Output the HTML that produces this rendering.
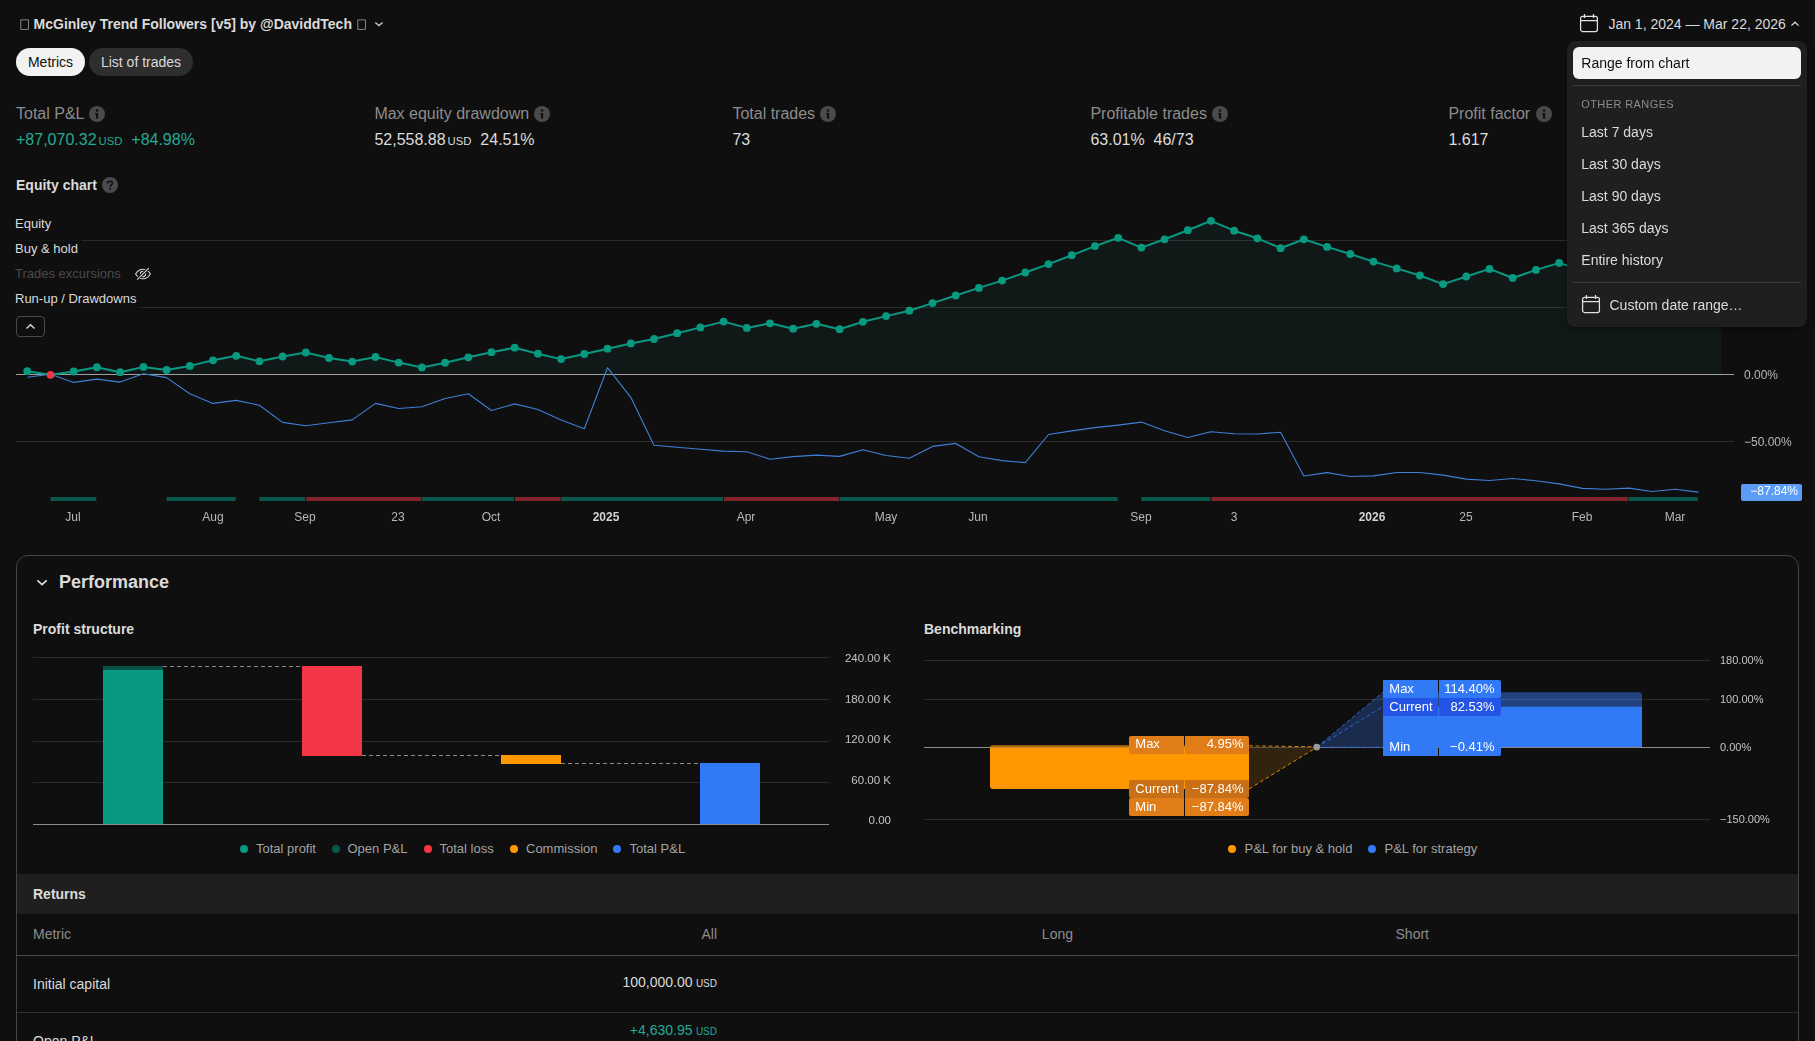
<!DOCTYPE html>
<html><head><meta charset="utf-8"><title>Strategy report</title>
<style>
*{box-sizing:border-box;margin:0;padding:0}
html,body{width:1815px;height:1041px;overflow:hidden;background:#0f0f0f}
body{font-family:"Liberation Sans",sans-serif;color:#dbdbdb;position:relative;font-size:14px}
.abs{position:absolute}
.t{position:absolute;white-space:nowrap;line-height:1}
.title{left:33px;top:16px;font-size:14px;font-weight:700;line-height:16px;color:#dbdbdb}
.tofu{position:absolute;top:19px;width:8px;height:10px;border:1px solid #bdbdbd}
.pill{position:absolute;top:48px;height:28px;border-radius:14px;font-size:14px;line-height:28px;text-align:center}
.mlabel{font-size:16px;color:#8c8c8c;top:105px;line-height:18px}
.mval{font-size:16px;color:#dbdbdb;top:131px;line-height:18px}
.mval small{font-size:11.3px;margin-left:2px}
.info{position:absolute;top:106px;width:16px;height:16px}
.lg{position:absolute;left:11px;height:22px;line-height:22px;font-size:13px;padding:0 4px;background:rgba(15,15,15,.8);color:#dbdbdb;white-space:nowrap}
.xl{position:absolute;top:510px;width:60px;text-align:center;font-size:12px;line-height:14px;color:#b8b8b8}
.xl.b{font-weight:700;color:#d1d1d1}
.yl{position:absolute;left:1744px;font-size:12px;line-height:14px;color:#b8b8b8}
.menu{position:absolute;left:1567px;top:41px;width:240px;height:286px;border-radius:8px;background:#1f1f1f;box-shadow:0 2px 6px rgba(0,0,0,.45)}
.mi{position:absolute;left:14.3px;font-size:14px;line-height:16px;color:#dbdbdb;white-space:nowrap}
.sep{position:absolute;left:6px;width:228px;height:1px;background:#3d3d3d}
.panel{position:absolute;left:16px;top:555px;width:1783px;height:520px;border:1px solid #434343;border-radius:12px}
.h3{font-size:14px;font-weight:700;color:#dbdbdb;line-height:16px}
.pyl{position:absolute;font-size:11px;line-height:12px;color:#c4c4c4}
.leg{position:absolute;top:841px;font-size:13px;line-height:15px;color:#a3a3a3;white-space:nowrap}
.dot{position:absolute;top:845px;width:8px;height:8px;border-radius:50%}
.bl{position:absolute;height:18px;font-size:13px;line-height:18px;color:#fff;white-space:nowrap}
.bl.k{padding-left:6.3px;text-align:left;border-radius:2px 0 0 2px}
.bl.v{padding-right:6.5px;text-align:right;border-radius:0 2px 2px 0}
.bl.o{height:17.8px;line-height:16px}
.bl.v.o{padding-right:5.5px}
.bl.k.b{border-radius:0}
.xl,.yl,.pyl,.bl,.cv,.menu{will-change:transform}
</style></head><body>
<!-- header -->
<svg class="abs" style="left:19.5px;top:18.5px" width="10" height="12" viewBox="0 0 10 12"><rect x="0.85" y="0.9" width="7.6" height="9.4" fill="none" stroke="#b4b4b4" stroke-width=".7"/></svg>
<div class="t title" style="left:33.6px">McGinley Trend Followers [v5] by @DaviddTech</div>
<svg class="abs" style="left:356.5px;top:18.5px" width="10" height="12" viewBox="0 0 10 12"><rect x="0.85" y="0.9" width="7.6" height="9.4" fill="none" stroke="#b4b4b4" stroke-width=".7"/></svg>
<svg class="abs" style="left:373px;top:19px" width="12" height="10" viewBox="0 0 12 10"><path d="M2.3 3.4 L5.95 6.6 L9.6 3.4" fill="none" stroke="#c9c9c9" stroke-width="1.35"/></svg>

<svg class="abs" style="left:1578px;top:13px" width="22" height="20" viewBox="0 0 22 20"><rect x="2.6" y="3.45" width="16.8" height="15.05" rx="2" fill="none" stroke="#e0e0e0" stroke-width="1.25"/><path d="M2.6 7.5H19.4M6.45 1V5.1M15.5 1V5.1" stroke="#e0e0e0" stroke-width="1.25" fill="none"/></svg>
<div class="t" style="left:1608.4px;top:16px;font-size:14px;line-height:16px;color:#dbdbdb">Jan 1, 2024 — Mar 22, 2026</div>
<svg class="abs" style="left:1789px;top:19px" width="12" height="10" viewBox="0 0 12 10"><path d="M2.4 6.6 L6 3.2 L9.6 6.6" fill="none" stroke="#dbdbdb" stroke-width="1.3"/></svg>

<!-- tabs -->
<div class="pill" style="left:16px;width:69px;background:#f2f2f2;color:#0f0f0f">Metrics</div>
<div class="pill" style="left:89px;width:104px;background:#2e2e2e;color:#dbdbdb">List of trades</div>

<!-- metrics -->
<div class="t mlabel" style="left:16px">Total P&amp;L</div>
<div class="t mval" style="left:16px;color:#22ab94">+87,070.32<small>USD</small>&nbsp; +84.98%</div>
<div class="t mlabel" style="left:374.4px">Max equity drawdown</div>
<div class="t mval" style="left:374.4px">52,558.88<small>USD</small>&nbsp; 24.51%</div>
<div class="t mlabel" style="left:732.4px">Total trades</div>
<div class="t mval" style="left:732.4px">73</div>
<div class="t mlabel" style="left:1090.4px">Profitable trades</div>
<div class="t mval" style="left:1090.4px">63.01%&nbsp; 46/73</div>
<div class="t mlabel" style="left:1448.4px">Profit factor</div>
<div class="t mval" style="left:1448.4px">1.617</div>
<svg class="info" style="left:89px" viewBox="0 0 16 16"><circle cx="8" cy="8" r="8" fill="#4a4a4a"/><rect x="7.05" y="7" width="2.1" height="5.7" fill="#0f0f0f"/><rect x="6.1" y="7" width="1.5" height="1.3" fill="#0f0f0f"/><circle cx="8.1" cy="4.4" r="1.25" fill="#0f0f0f"/></svg><svg class="info" style="left:533.5px" viewBox="0 0 16 16"><circle cx="8" cy="8" r="8" fill="#4a4a4a"/><rect x="7.05" y="7" width="2.1" height="5.7" fill="#0f0f0f"/><rect x="6.1" y="7" width="1.5" height="1.3" fill="#0f0f0f"/><circle cx="8.1" cy="4.4" r="1.25" fill="#0f0f0f"/></svg><svg class="info" style="left:820px" viewBox="0 0 16 16"><circle cx="8" cy="8" r="8" fill="#4a4a4a"/><rect x="7.05" y="7" width="2.1" height="5.7" fill="#0f0f0f"/><rect x="6.1" y="7" width="1.5" height="1.3" fill="#0f0f0f"/><circle cx="8.1" cy="4.4" r="1.25" fill="#0f0f0f"/></svg><svg class="info" style="left:1212px" viewBox="0 0 16 16"><circle cx="8" cy="8" r="8" fill="#4a4a4a"/><rect x="7.05" y="7" width="2.1" height="5.7" fill="#0f0f0f"/><rect x="6.1" y="7" width="1.5" height="1.3" fill="#0f0f0f"/><circle cx="8.1" cy="4.4" r="1.25" fill="#0f0f0f"/></svg><svg class="info" style="left:1535.5px" viewBox="0 0 16 16"><circle cx="8" cy="8" r="8" fill="#4a4a4a"/><rect x="7.05" y="7" width="2.1" height="5.7" fill="#0f0f0f"/><rect x="6.1" y="7" width="1.5" height="1.3" fill="#0f0f0f"/><circle cx="8.1" cy="4.4" r="1.25" fill="#0f0f0f"/></svg>

<!-- equity chart header -->
<div class="t h3" style="left:16px;top:177px">Equity chart</div>
<svg class="abs" style="left:102px;top:177px" width="16" height="16" viewBox="0 0 16 16"><circle cx="8" cy="8" r="8" fill="#4a4a4a"/><path d="M5.6 6.4 C5.6 4.9 6.6 4.15 8 4.15 C9.4 4.15 10.4 4.9 10.4 6.1 C10.4 7.1 9.8 7.6 9.1 8.1 C8.4 8.6 8.1 9 8.1 10" fill="none" stroke="#0f0f0f" stroke-width="1.5"/><circle cx="8.1" cy="12" r="1" fill="#0f0f0f"/></svg>

<!-- equity chart -->
<svg class="abs" style="left:0;top:0" width="1815" height="545" viewBox="0 0 1815 545">
<polygon points="27.3,371.2 50.5,374.8 73.7,371.5 96.9,367.2 120.1,372.2 143.4,366.9 166.6,370 189.8,365.9 213.0,360.3 236.2,355.8 259.4,361.3 282.6,356.5 305.8,352.5 329.0,358 352.2,361.6 375.5,357 398.7,362.6 421.9,367.4 445.1,362.7 468.3,357.3 491.5,352.2 514.7,347.7 537.9,353.7 561.1,359.1 584.3,354 607.5,348.7 630.8,343.4 654.0,339 677.2,333.2 700.4,327.4 723.6,321.6 746.8,327.9 770.0,323.3 793.2,328.7 816.4,323.8 839.6,329.2 862.9,321.8 886.1,316.1 909.3,310.7 932.5,303.1 955.7,295.5 978.9,287.9 1002.1,280.6 1025.3,272.5 1048.5,264.1 1071.8,255.2 1095.0,246.1 1118.2,237.8 1141.4,247.6 1164.6,239.3 1187.8,230.2 1211.0,220.8 1234.2,230.7 1257.4,238.3 1280.6,248.2 1303.8,239.3 1327.1,246.9 1350.3,254 1373.5,261.6 1396.7,268.4 1419.9,275.5 1443.1,284.1 1466.3,276.5 1489.5,268.9 1512.7,278.0 1536.0,269.9 1559.2,262.9 1582.4,270.5 1605.6,263 1628.8,256 1652.0,263.5 1675.2,270 1698.4,263.7 1721,263.7 1721,374.5 27.3,374.5" fill="#111918"/>
<line x1="16" x2="1734" y1="240.5" y2="240.5" stroke="rgba(255,255,255,.115)" stroke-width="1"/>
<line x1="16" x2="1734" y1="307.5" y2="307.5" stroke="rgba(255,255,255,.115)" stroke-width="1"/>
<line x1="16" x2="1734" y1="441.5" y2="441.5" stroke="rgba(255,255,255,.115)" stroke-width="1"/>
<line x1="16" x2="1734" y1="374.5" y2="374.5" stroke="#9e9e9e" stroke-width="1.1"/>
<polyline points="27.3,377.3 50.5,374.3 73.7,382.4 96.9,379.1 120.1,382.1 143.4,373.8 166.6,377.6 189.8,393.8 213.0,403.4 236.2,400.4 259.4,405.2 282.6,422.4 305.8,425.7 329.0,422.7 352.2,419.9 375.5,403.4 398.7,408.5 421.9,406.7 445.1,398.5 468.3,393.8 491.5,410.5 514.7,403.9 537.9,409.5 561.1,420.1 584.3,428.8 607.5,367.7 630.8,397.3 654.0,445.2 677.2,447.3 700.4,449.3 723.6,451.1 746.8,451.8 770.0,459.2 793.2,456.6 816.4,455.1 839.6,456.4 862.9,449.8 886.1,455.5 909.3,458.3 932.5,446.4 955.7,443.4 978.9,456.8 1002.1,460.6 1025.3,462.6 1048.5,434.5 1071.8,430.9 1095.0,427.6 1118.2,425.1 1141.4,422.1 1164.6,430.7 1187.8,437.5 1211.0,431.7 1234.2,433.7 1257.4,434 1280.6,432.2 1303.8,476 1327.1,472.6 1350.3,476.5 1373.5,475.9 1396.7,472.5 1419.9,472.5 1443.1,475.1 1466.3,479.1 1489.5,480.5 1512.7,478.5 1536.0,480.8 1559.2,483.9 1582.4,488.4 1605.6,489.3 1628.8,488.1 1652.0,491.5 1675.2,489.3 1698.4,492.1" fill="none" stroke="#3f7fd6" stroke-width="1.1" stroke-linejoin="round"/>
<polyline points="27.3,371.2 50.5,374.8 73.7,371.5 96.9,367.2 120.1,372.2 143.4,366.9 166.6,370 189.8,365.9 213.0,360.3 236.2,355.8 259.4,361.3 282.6,356.5 305.8,352.5 329.0,358 352.2,361.6 375.5,357 398.7,362.6 421.9,367.4 445.1,362.7 468.3,357.3 491.5,352.2 514.7,347.7 537.9,353.7 561.1,359.1 584.3,354 607.5,348.7 630.8,343.4 654.0,339 677.2,333.2 700.4,327.4 723.6,321.6 746.8,327.9 770.0,323.3 793.2,328.7 816.4,323.8 839.6,329.2 862.9,321.8 886.1,316.1 909.3,310.7 932.5,303.1 955.7,295.5 978.9,287.9 1002.1,280.6 1025.3,272.5 1048.5,264.1 1071.8,255.2 1095.0,246.1 1118.2,237.8 1141.4,247.6 1164.6,239.3 1187.8,230.2 1211.0,220.8 1234.2,230.7 1257.4,238.3 1280.6,248.2 1303.8,239.3 1327.1,246.9 1350.3,254 1373.5,261.6 1396.7,268.4 1419.9,275.5 1443.1,284.1 1466.3,276.5 1489.5,268.9 1512.7,278.0 1536.0,269.9 1559.2,262.9 1582.4,270.5 1605.6,263 1628.8,256 1652.0,263.5 1675.2,270 1698.4,263.7" fill="none" stroke="#089981" stroke-width="2" stroke-linejoin="round"/>
<circle cx="27.3" cy="371.2" r="3.9" fill="#089981"/>
<circle cx="50.5" cy="374.8" r="3.9" fill="#f23645"/>
<circle cx="73.7" cy="371.5" r="3.9" fill="#089981"/>
<circle cx="96.9" cy="367.2" r="3.9" fill="#089981"/>
<circle cx="120.1" cy="372.2" r="3.9" fill="#089981"/>
<circle cx="143.4" cy="366.9" r="3.9" fill="#089981"/>
<circle cx="166.6" cy="370" r="3.9" fill="#089981"/>
<circle cx="189.8" cy="365.9" r="3.9" fill="#089981"/>
<circle cx="213.0" cy="360.3" r="3.9" fill="#089981"/>
<circle cx="236.2" cy="355.8" r="3.9" fill="#089981"/>
<circle cx="259.4" cy="361.3" r="3.9" fill="#089981"/>
<circle cx="282.6" cy="356.5" r="3.9" fill="#089981"/>
<circle cx="305.8" cy="352.5" r="3.9" fill="#089981"/>
<circle cx="329.0" cy="358" r="3.9" fill="#089981"/>
<circle cx="352.2" cy="361.6" r="3.9" fill="#089981"/>
<circle cx="375.5" cy="357" r="3.9" fill="#089981"/>
<circle cx="398.7" cy="362.6" r="3.9" fill="#089981"/>
<circle cx="421.9" cy="367.4" r="3.9" fill="#089981"/>
<circle cx="445.1" cy="362.7" r="3.9" fill="#089981"/>
<circle cx="468.3" cy="357.3" r="3.9" fill="#089981"/>
<circle cx="491.5" cy="352.2" r="3.9" fill="#089981"/>
<circle cx="514.7" cy="347.7" r="3.9" fill="#089981"/>
<circle cx="537.9" cy="353.7" r="3.9" fill="#089981"/>
<circle cx="561.1" cy="359.1" r="3.9" fill="#089981"/>
<circle cx="584.3" cy="354" r="3.9" fill="#089981"/>
<circle cx="607.5" cy="348.7" r="3.9" fill="#089981"/>
<circle cx="630.8" cy="343.4" r="3.9" fill="#089981"/>
<circle cx="654.0" cy="339" r="3.9" fill="#089981"/>
<circle cx="677.2" cy="333.2" r="3.9" fill="#089981"/>
<circle cx="700.4" cy="327.4" r="3.9" fill="#089981"/>
<circle cx="723.6" cy="321.6" r="3.9" fill="#089981"/>
<circle cx="746.8" cy="327.9" r="3.9" fill="#089981"/>
<circle cx="770.0" cy="323.3" r="3.9" fill="#089981"/>
<circle cx="793.2" cy="328.7" r="3.9" fill="#089981"/>
<circle cx="816.4" cy="323.8" r="3.9" fill="#089981"/>
<circle cx="839.6" cy="329.2" r="3.9" fill="#089981"/>
<circle cx="862.9" cy="321.8" r="3.9" fill="#089981"/>
<circle cx="886.1" cy="316.1" r="3.9" fill="#089981"/>
<circle cx="909.3" cy="310.7" r="3.9" fill="#089981"/>
<circle cx="932.5" cy="303.1" r="3.9" fill="#089981"/>
<circle cx="955.7" cy="295.5" r="3.9" fill="#089981"/>
<circle cx="978.9" cy="287.9" r="3.9" fill="#089981"/>
<circle cx="1002.1" cy="280.6" r="3.9" fill="#089981"/>
<circle cx="1025.3" cy="272.5" r="3.9" fill="#089981"/>
<circle cx="1048.5" cy="264.1" r="3.9" fill="#089981"/>
<circle cx="1071.8" cy="255.2" r="3.9" fill="#089981"/>
<circle cx="1095.0" cy="246.1" r="3.9" fill="#089981"/>
<circle cx="1118.2" cy="237.8" r="3.9" fill="#089981"/>
<circle cx="1141.4" cy="247.6" r="3.9" fill="#089981"/>
<circle cx="1164.6" cy="239.3" r="3.9" fill="#089981"/>
<circle cx="1187.8" cy="230.2" r="3.9" fill="#089981"/>
<circle cx="1211.0" cy="220.8" r="3.9" fill="#089981"/>
<circle cx="1234.2" cy="230.7" r="3.9" fill="#089981"/>
<circle cx="1257.4" cy="238.3" r="3.9" fill="#089981"/>
<circle cx="1280.6" cy="248.2" r="3.9" fill="#089981"/>
<circle cx="1303.8" cy="239.3" r="3.9" fill="#089981"/>
<circle cx="1327.1" cy="246.9" r="3.9" fill="#089981"/>
<circle cx="1350.3" cy="254" r="3.9" fill="#089981"/>
<circle cx="1373.5" cy="261.6" r="3.9" fill="#089981"/>
<circle cx="1396.7" cy="268.4" r="3.9" fill="#089981"/>
<circle cx="1419.9" cy="275.5" r="3.9" fill="#089981"/>
<circle cx="1443.1" cy="284.1" r="3.9" fill="#089981"/>
<circle cx="1466.3" cy="276.5" r="3.9" fill="#089981"/>
<circle cx="1489.5" cy="268.9" r="3.9" fill="#089981"/>
<circle cx="1512.7" cy="278.0" r="3.9" fill="#089981"/>
<circle cx="1536.0" cy="269.9" r="3.9" fill="#089981"/>
<circle cx="1559.2" cy="262.9" r="3.9" fill="#089981"/>
<circle cx="1582.4" cy="270.5" r="3.9" fill="#089981"/>
<circle cx="1605.6" cy="263" r="3.9" fill="#089981"/>
<circle cx="1628.8" cy="256" r="3.9" fill="#089981"/>
<circle cx="1652.0" cy="263.5" r="3.9" fill="#089981"/>
<circle cx="1675.2" cy="270" r="3.9" fill="#089981"/>
<circle cx="1698.4" cy="263.7" r="3.9" fill="#089981"/>
<rect x="50.5" y="497" width="45.8" height="4" fill="#0a584c"/>
<rect x="166.6" y="497" width="69.0" height="4" fill="#0a584c"/>
<rect x="259.4" y="497" width="45.8" height="4" fill="#0a584c"/>
<rect x="306.1" y="497" width="115.2" height="4" fill="#82232d"/>
<rect x="421.9" y="497" width="92.2" height="4" fill="#0a584c"/>
<rect x="515.0" y="497" width="45.5" height="4" fill="#82232d"/>
<rect x="561.1" y="497" width="161.9" height="4" fill="#0a584c"/>
<rect x="723.9" y="497" width="115.1" height="4" fill="#82232d"/>
<rect x="839.6" y="497" width="278.0" height="4" fill="#0a584c"/>
<rect x="1141.4" y="497" width="69.0" height="4" fill="#0a584c"/>
<rect x="1211.3" y="497" width="416.9" height="4" fill="#82232d"/>
<rect x="1628.8" y="497" width="69.0" height="4" fill="#0a584c"/>
</svg>
<div class="xl" style="left:43.2px">Jul</div><div class="xl" style="left:182.5px">Aug</div><div class="xl" style="left:275.3px">Sep</div><div class="xl" style="left:368.2px">23</div><div class="xl" style="left:461.0px">Oct</div><div class="xl b" style="left:576.4px">2025</div><div class="xl" style="left:716.3px">Apr</div><div class="xl" style="left:855.6px">May</div><div class="xl" style="left:948.4px">Jun</div><div class="xl" style="left:1110.9px">Sep</div><div class="xl" style="left:1203.7px">3</div><div class="xl b" style="left:1342.4px">2026</div><div class="xl" style="left:1435.8px">25</div><div class="xl" style="left:1551.9px">Feb</div><div class="xl" style="left:1644.7px">Mar</div>
<!-- chart legend labels -->
<div class="lg" style="top:213px">Equity</div>
<div class="lg" style="top:238px">Buy &amp; hold</div>
<div class="lg" style="top:263px;color:#4a4a4a;width:142px">Trades excursions</div>
<svg class="abs" style="left:134px;top:265px" width="18" height="18" viewBox="0 0 18 18"><path d="M1.6 9 C3.6 5.6 6.2 4.2 9 4.2 C11.8 4.2 14.4 5.6 16.4 9 C14.4 12.4 11.8 13.8 9 13.8 C6.2 13.8 3.6 12.4 1.6 9 Z" fill="none" stroke="#dbdbdb" stroke-width="1.1"/><circle cx="9" cy="9" r="2.6" fill="none" stroke="#dbdbdb" stroke-width="1.1"/><path d="M3.4 14.2 L14.6 3.4" stroke="#0f0f0f" stroke-width="3"/><path d="M3.2 14.6 L14.8 3.2" stroke="#dbdbdb" stroke-width="1.1"/></svg>
<div class="lg" style="top:288px">Run-up / Drawdowns</div>
<div class="abs" style="left:16px;top:316px;width:29px;height:21px;border:1px solid #4a4a4a;border-radius:4px"></div>
<svg class="abs" style="left:24px;top:321px" width="12" height="10" viewBox="0 0 12 10"><path d="M2.5 7.5 L6.5 3.7 L10.5 7.5" fill="none" stroke="#dbdbdb" stroke-width="1.4"/></svg>

<!-- y labels -->
<div class="yl" style="top:368px">0.00%</div>
<div class="yl" style="top:435px">−50.00%</div>
<div class="abs cv" style="left:1741px;top:483.5px;width:61px;height:17px;background:#5b9cf6;border-radius:2px;color:#fff;font-size:12px;line-height:15px;text-align:right;padding-right:4px">−87.84%</div>

<!-- dropdown menu -->
<div class="menu">
  <div class="abs" style="left:6px;top:6px;width:228px;height:32px;border-radius:6px;background:#f2f2f2"></div>
  <div class="mi" style="top:14px;color:#0f0f0f">Range from chart</div>
  <div class="sep" style="top:44px"></div>
  <div class="mi" style="top:57px;font-size:11px;line-height:12px;letter-spacing:.4px;color:#8c8c8c">OTHER RANGES</div>
  <div class="mi" style="top:83px">Last 7 days</div>
  <div class="mi" style="top:115px">Last 30 days</div>
  <div class="mi" style="top:147px">Last 90 days</div>
  <div class="mi" style="top:179px">Last 365 days</div>
  <div class="mi" style="top:211px">Entire history</div>
  <div class="sep" style="top:241px"></div>
  <svg class="abs" style="left:13px;top:253px" width="22" height="20" viewBox="0 0 22 20"><rect x="2.6" y="3.45" width="16.8" height="15.05" rx="2" fill="none" stroke="#e0e0e0" stroke-width="1.25"/><path d="M2.6 7.5H19.4M6.45 1V5.1M15.5 1V5.1" stroke="#e0e0e0" stroke-width="1.25" fill="none"/></svg>
  <div class="mi" style="left:42.5px;top:256px">Custom date range…</div>
</div>
<!-- performance panel -->
<div class="panel"></div>
<svg class="abs" style="left:35px;top:576px" width="14" height="12" viewBox="0 0 14 12"><path d="M2.4 4.3 L7.05 8.7 L11.7 4.3" fill="none" stroke="#dbdbdb" stroke-width="1.7"/></svg>
<div class="t" style="left:59px;top:572px;font-size:18px;font-weight:700;line-height:20px;color:#dbdbdb">Performance</div>
<div class="t h3" style="left:33px;top:621px">Profit structure</div>
<div class="t h3" style="left:924px;top:621px">Benchmarking</div>

<svg class="abs" style="left:0;top:640px" width="1815" height="200" viewBox="0 640 1815 200">
  <!-- profit structure -->
  <g stroke="#2a2a2a" stroke-width="1">
    <line x1="33" x2="829" y1="657.5" y2="657.5"/><line x1="33" x2="829" y1="699.5" y2="699.5"/>
    <line x1="33" x2="829" y1="741.5" y2="741.5"/><line x1="33" x2="829" y1="782.5" y2="782.5"/>
  </g>
  <rect x="103" y="666" width="60" height="4" fill="#065448"/>
  <rect x="103" y="670" width="60" height="154" fill="#089981"/>
  <rect x="302" y="666" width="60" height="90" fill="#f23645"/>
  <rect x="501" y="755" width="60" height="9" fill="#ff9800"/>
  <rect x="700" y="763" width="60" height="61" fill="#3179f5"/>
  <g stroke="#8c8c8c" stroke-width="1" stroke-dasharray="4 3">
    <line x1="163" x2="302" y1="666.5" y2="666.5"/><line x1="362" x2="501" y1="755.5" y2="755.5"/><line x1="561" x2="700" y1="763.5" y2="763.5"/>
  </g>
  <line x1="33" x2="829" y1="824.5" y2="824.5" stroke="#8c8c8c" stroke-width="1"/>

  <!-- benchmarking -->
  <line x1="924" x2="1710" y1="747.5" y2="747.5" stroke="#8c8c8c" stroke-width="1"/>
  <!-- orange -->
  <path d="M990 747.5 H1249 V789 H993 Q990 789 990 786 Z" fill="#ff9800"/>
  <path d="M993 745.2 H1249 V747.2 H990 Q990 745.2 993 745.2 Z" fill="#b36b00"/>
  <polygon points="1249,747.5 1316.7,747.3 1249,789" fill="#32230f"/>
  <g stroke="#ff9800" stroke-width="1" stroke-dasharray="4 2.5" fill="none" opacity=".85">
    <line x1="1249" x2="1316.7" y1="789" y2="747.3"/><line x1="1249" x2="1316.7" y1="745.8" y2="746.8"/>
  </g>
  <!-- blue -->
  <path d="M1383 692.3 H1639 Q1642 692.3 1642 695.3 V706.5 H1383 Z" fill="#22427f"/>
  <rect x="1383" y="706.5" width="259" height="40.5" fill="#3179f5"/>
  <polygon points="1316.7,747.3 1383,692.3 1383,747.5" fill="#1a2b4d"/>
  <g stroke="#3179f5" stroke-width="1" stroke-dasharray="4 2.5" fill="none" opacity=".8">
    <line x1="1316.7" x2="1383" y1="747.3" y2="692.3"/><line x1="1316.7" x2="1383" y1="747.3" y2="706.5"/><line x1="1316.7" x2="1383" y1="747.3" y2="747.3"/>
  </g>
  <g stroke="rgba(255,255,255,.115)" stroke-width="1">
    <line x1="924" x2="1710" y1="660.5" y2="660.5"/><line x1="924" x2="1710" y1="699.5" y2="699.5"/><line x1="924" x2="1710" y1="819.5" y2="819.5"/>
  </g>
  <circle cx="1316.7" cy="747.1" r="3.4" fill="#9a9a9a"/>
</svg>

<!-- benchmark labels -->
<div class="bl k o" style="left:1129px;top:735.8px;width:55px;background:#e07d19">Max</div><div class="bl v o" style="left:1185px;top:735.8px;width:64px;background:#e07d19">4.95%</div>
<div class="bl k o" style="left:1129px;top:780.2px;width:55px;background:#c96f16;height:17.6px;line-height:17.4px">Current</div><div class="bl v o" style="left:1185px;top:780.2px;width:64px;background:#c96f16;height:17.6px;line-height:17.4px">−87.84%</div>
<div class="bl k o" style="left:1129px;top:798px;width:55px;background:#e07d19;line-height:17.4px">Min</div><div class="bl v o" style="left:1185px;top:798px;width:64px;background:#e07d19;line-height:17.4px">−87.84%</div>
<div class="bl k b" style="left:1383px;top:680px;width:55px;background:#3179f5">Max</div><div class="bl v b" style="left:1439px;top:680px;width:62px;background:#3179f5">114.40%</div>
<div class="bl k b" style="left:1383px;top:698px;width:55px;background:#2354e6;height:17.6px;line-height:17px">Current</div><div class="bl v b" style="left:1439px;top:698px;width:62px;background:#2354e6;height:17.6px;line-height:17px">82.53%</div>
<div class="bl k b" style="left:1383px;top:737.8px;width:55px;background:#3179f5">Min</div><div class="bl v b" style="left:1439px;top:737.8px;width:62px;background:#3179f5">−0.41%</div>

<!-- profit y labels -->
<div class="pyl" style="font-size:11.5px;left:791px;width:100px;text-align:right;top:652px">240.00 K</div>
<div class="pyl" style="font-size:11.5px;left:791px;width:100px;text-align:right;top:693px">180.00 K</div>
<div class="pyl" style="font-size:11.5px;left:791px;width:100px;text-align:right;top:733px">120.00 K</div>
<div class="pyl" style="font-size:11.5px;left:791px;width:100px;text-align:right;top:774px">60.00 K</div>
<div class="pyl" style="font-size:11.5px;left:791px;width:100px;text-align:right;top:814px">0.00</div>
<div class="pyl" style="left:1720px;top:654px">180.00%</div>
<div class="pyl" style="left:1720px;top:693px">100.00%</div>
<div class="pyl" style="left:1720px;top:741px">0.00%</div>
<div class="pyl" style="left:1720px;top:813px">−150.00%</div>

<!-- legends -->
<div class="dot" style="left:240px;background:#089981"></div><div class="leg" style="left:256px">Total profit</div>
<div class="dot" style="left:332px;background:#06594c"></div><div class="leg" style="left:347.5px">Open P&amp;L</div>
<div class="dot" style="left:423.7px;background:#f23645"></div><div class="leg" style="left:439.5px">Total loss</div>
<div class="dot" style="left:510px;background:#ff9800"></div><div class="leg" style="left:526px">Commission</div>
<div class="dot" style="left:613.2px;background:#3179f5"></div><div class="leg" style="left:629.5px">Total P&amp;L</div>
<div class="dot" style="left:1228px;background:#ff9800"></div><div class="leg" style="left:1244.5px">P&amp;L for buy &amp; hold</div>
<div class="dot" style="left:1367.8px;background:#3179f5"></div><div class="leg" style="left:1384.5px">P&amp;L for strategy</div>

<!-- returns table -->
<div class="abs" style="left:17px;top:874px;width:1781px;height:40px;background:#1f1f1f"></div>
<div class="t h3" style="left:33px;top:886px">Returns</div>
<div class="t" style="left:33px;top:926px;font-size:14px;line-height:16px;color:#8c8c8c">Metric</div>
<div class="t" style="left:617px;width:100px;text-align:right;top:926px;font-size:14px;line-height:16px;color:#8c8c8c">All</div>
<div class="t" style="left:973px;width:100px;text-align:right;top:926px;font-size:14px;line-height:16px;color:#8c8c8c">Long</div>
<div class="t" style="left:1329px;width:100px;text-align:right;top:926px;font-size:14px;line-height:16px;color:#8c8c8c">Short</div>
<div class="abs" style="left:17px;top:955px;width:1781px;height:1px;background:#4a4a4a"></div>
<div class="t" style="left:33px;top:976px;font-size:14px;line-height:16px;color:#dbdbdb">Initial capital</div>
<div class="t" style="left:517px;width:200px;text-align:right;top:974px;font-size:14px;line-height:16px;color:#dbdbdb">100,000.00<span style="font-size:10px;margin-left:3.4px">USD</span></div>
<div class="abs" style="left:17px;top:1012px;width:1781px;height:1px;background:#2e2e2e"></div>
<div class="t" style="left:33px;top:1033px;font-size:14px;line-height:16px;color:#dbdbdb">Open P&amp;L</div>
<div class="t" style="left:517px;width:200px;text-align:right;top:1022px;font-size:14px;line-height:16px;color:#22ab94">+4,630.95<span style="font-size:10px;margin-left:3.4px">USD</span></div>
</body></html>
